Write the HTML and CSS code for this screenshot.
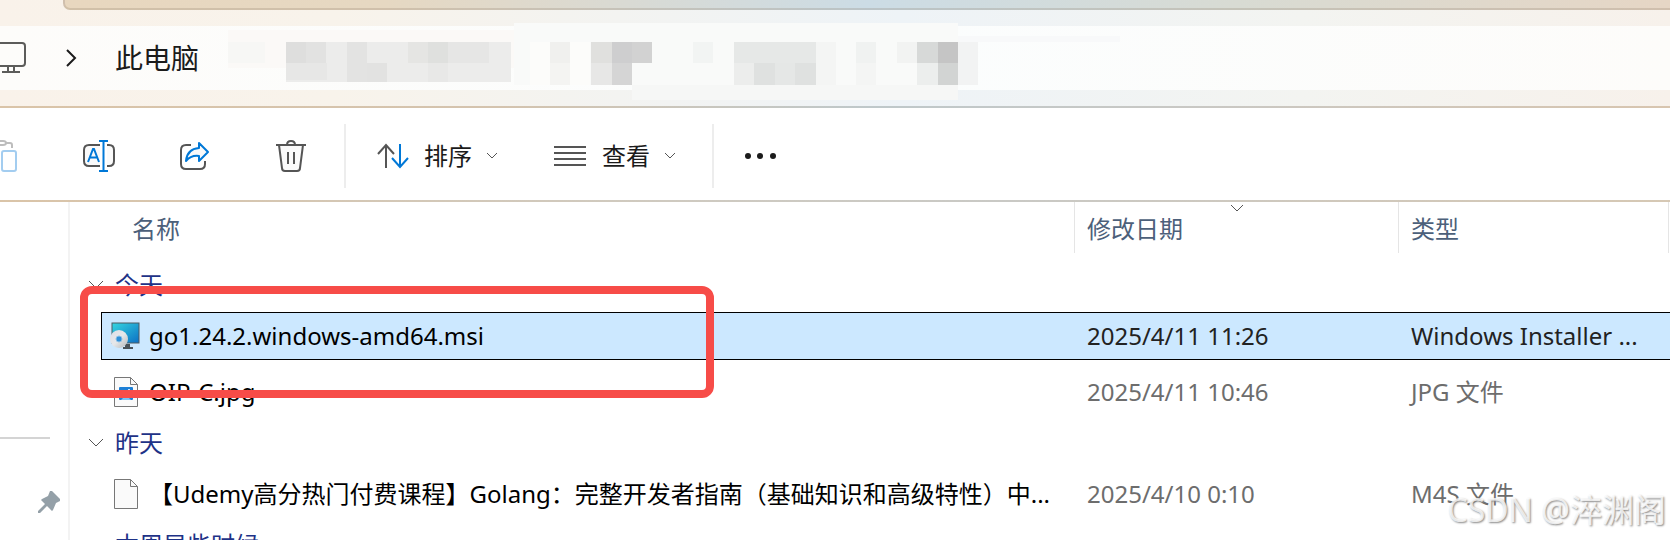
FILE: index.html
```html
<!DOCTYPE html>
<html lang="zh-CN">
<head>
  <meta charset="UTF-8">
  <title>此电脑</title>
  <link rel="stylesheet" href="styles.css">
</head>
<body>

  <header class="titlebar">
    <div class="tab"></div>
    <div class="address">
      <svg class="pc-icon" width="28" height="32" viewBox="0 0 28 32" fill="none" stroke="#5c5c5a" stroke-width="2">
        <rect x="-5" y="1" width="30" height="23" rx="3"/>
        <path d="M8 24v5M14 24v5M2 30h18"/>
      </svg>
      <svg class="crumb-arrow" width="12" height="20" viewBox="0 0 12 20" fill="none" stroke="#1b1b1b" stroke-width="2">
        <path d="M1 2l8 8-8 8"/>
      </svg>
      <a class="crumb" href="#">此电脑</a>
      <!-- pixelated part of the path -->
      <svg class="mosaic" width="892" height="84" viewBox="0 0 892 84" shape-rendering="crispEdges">
        <rect x="0" y="14" width="286" height="38" fill="#fbf9f7"/>
        <rect x="0" y="26" width="37" height="21" fill="#f7f7f5"/>
        <rect x="58" y="26" width="225" height="40" fill="#ececeb"/>
        <rect x="58" y="26" width="20" height="21" fill="#dededd"/>
        <rect x="78" y="26" width="20" height="21" fill="#e2e2e1"/>
        <rect x="58" y="47" width="41" height="17" fill="#e7e7e6"/>
        <rect x="119" y="26" width="20" height="40" fill="#e3e3e2"/>
        <rect x="139" y="47" width="20" height="19" fill="#e2e2e1"/>
        <rect x="180" y="26" width="20" height="21" fill="#e5e5e3"/>
        <rect x="200" y="26" width="20" height="21" fill="#dfe0de"/>
        <rect x="200" y="47" width="20" height="19" fill="#e8e8e7"/>
        <rect x="220" y="26" width="41" height="21" fill="#e6e6e5"/>
        <rect x="286" y="7" width="444" height="62" fill="#f9faf9"/>
        <rect x="404" y="69" width="326" height="15" fill="#f6f7f6"/>
        <rect x="730" y="20" width="162" height="6" fill="#f8f9fa"/>
        <rect x="302" y="26" width="20" height="43" fill="#fcfcfa"/>
        <rect x="322" y="26" width="20" height="43" fill="#f4f4f2"/>
        <rect x="322" y="26" width="20" height="21" fill="#f0f0ee"/>
        <rect x="342" y="26" width="20" height="43" fill="#fcfcfa"/>
        <rect x="363" y="26" width="21" height="21" fill="#e0e0de"/>
        <rect x="363" y="47" width="21" height="22" fill="#e7e7e6"/>
        <rect x="384" y="26" width="20" height="21" fill="#cececf"/>
        <rect x="384" y="47" width="20" height="22" fill="#d5d5d5"/>
        <rect x="404" y="26" width="20" height="21" fill="#d2d2d2"/>
        <rect x="465" y="26" width="20" height="21" fill="#f2f4f3"/>
        <rect x="506" y="26" width="82" height="21" fill="#e6e8e7"/>
        <rect x="506" y="47" width="20" height="22" fill="#ecedec"/>
        <rect x="526" y="47" width="21" height="22" fill="#dfe1e0"/>
        <rect x="547" y="47" width="20" height="22" fill="#e5e7e6"/>
        <rect x="567" y="47" width="21" height="22" fill="#dfe1e0"/>
        <rect x="588" y="26" width="20" height="43" fill="#f4f5f4"/>
        <rect x="628" y="26" width="20" height="21" fill="#f0f2f1"/>
        <rect x="628" y="47" width="20" height="22" fill="#f4f5f4"/>
        <rect x="669" y="26" width="20" height="21" fill="#f2f3f2"/>
        <rect x="689" y="26" width="21" height="21" fill="#d7d9d8"/>
        <rect x="689" y="47" width="21" height="22" fill="#eceeed"/>
        <rect x="710" y="26" width="20" height="21" fill="#c5c5c5"/>
        <rect x="710" y="47" width="20" height="22" fill="#d2d4d3"/>
        <rect x="730" y="26" width="20" height="43" fill="#f2f3f3"/>
      </svg>
    </div>
  </header>

  <div class="toolbar">
    <button class="tool paste" aria-label="粘贴">
      <svg width="20" height="34" viewBox="0 0 20 34" fill="none" stroke-width="2">
        <path d="M-2 2h5q3 0 3 2t-3 2h-5M6 4h4q2 0 2 2v3" stroke="#bdbdbd"/>
        <rect x="2" y="12" width="14" height="20" rx="2" stroke="#a3cdf0"/>
      </svg>
    </button>
    <button class="tool rename" aria-label="重命名">
      <svg width="34" height="34" viewBox="0 0 34 34" fill="none" stroke-width="2">
        <path d="M18 6H7q-5 0-5 5v11q0 5 5 5h11M25 6h2q5 0 5 5v11q0 5-5 5h-2" fill="#fafafa" stroke="#555"/>
        <path d="M6 23l5-13h1l5 13M8 18.500h7M17 2h9M17 32h9M21.500 2v30" stroke="#0078d7"/>
      </svg>
    </button>
    <button class="tool share" aria-label="共享">
      <svg width="34" height="34" viewBox="0 0 34 34" fill="none" stroke-width="2" stroke-linejoin="round">
        <path d="M13 6H8Q3 6 3 11v14q0 5 5 5h14q5 0 5-5v-3" stroke="#555"/>
        <path d="M21 4l9 9-9 9v-5q-8-1-13 5 1-12 13-13z" fill="#fafafa" stroke="#0078d7"/>
      </svg>
    </button>
    <button class="tool delete" aria-label="删除">
      <svg width="34" height="34" viewBox="0 0 34 34" fill="none" stroke="#555" stroke-width="2">
        <path d="M5 6l3 23q0 3 3 3h12q3 0 3-3l3-23z" fill="#fafafa"/>
        <path d="M2 6h30M13 6q0-4 4-4t4 4M14 13v12M20 13v12"/>
      </svg>
    </button>
    <span class="separator"></span>
    <button class="tool sort">
      <svg width="34" height="28" viewBox="0 0 34 28" fill="none" stroke-width="2">
        <path d="M10 26V3M2 12l8-9 8 9" stroke="#555"/>
        <path d="M24 2v23M16 16l8 9 8-9" stroke="#0078d7"/>
      </svg>
      排序
      <svg class="caret" width="12" height="8" viewBox="0 0 12 8"><path d="M1 1l5 5 5-5"/></svg>
    </button>
    <button class="tool view">
      <svg width="34" height="22" viewBox="0 0 34 22" stroke="#555" stroke-width="2">
        <path d="M0 2h32M0 8h32M0 14h32M0 20h32"/>
      </svg>
      查看
      <svg class="caret" width="12" height="8" viewBox="0 0 12 8"><path d="M1 1l5 5 5-5"/></svg>
    </button>
    <span class="separator"></span>
    <button class="tool more" aria-label="更多">
      <svg width="34" height="8" viewBox="0 0 34 8" fill="#1b1b1b">
        <circle cx="4" cy="4" r="3"/><circle cx="16" cy="4" r="3"/><circle cx="29" cy="4" r="3"/>
      </svg>
    </button>
  </div>

  <div class="main">
    <nav class="sidebar">
      <hr>
      <svg class="pin" width="22" height="22" viewBox="0 0 22 22" fill="#94a0a8">
        <path d="M12 0h2l8 8v2l-4 2-3 7-1 1-5-5-7 7H0v-2l7-7-4-4 1-1 6-3z"/>
      </svg>
    </nav>

    <div class="files">
      <table>
        <colgroup>
          <col class="col-name"><col class="col-date"><col class="col-type"><col>
        </colgroup>
        <thead>
          <tr>
            <th class="name">名称</th>
            <th>修改日期
              <svg class="sort-mark" width="14" height="8" viewBox="0 0 14 8"><path d="M1 1l6 6 6-6"/></svg>
            </th>
            <th>类型</th>
            <th></th>
          </tr>
        </thead>
        <tbody>
          <tr class="group first">
            <td colspan="4"><div><svg class="fold" width="16" height="10" viewBox="0 0 16 10"><path d="M1 1l7 7 7-7"/></svg>今天</div></td>
          </tr>
          <tr class="file selected">
            <td class="name"><div>
              <svg class="file-icon" width="32" height="28" viewBox="0 0 32 28">
                <defs>
                  <linearGradient id="screen" x1="0" y1="0" x2="1" y2="1">
                    <stop offset="0" stop-color="#35d6e0"/><stop offset="1" stop-color="#0c6fc4"/>
                  </linearGradient>
                  <linearGradient id="disc" x1="0" y1="0" x2="1" y2="1">
                    <stop offset="0" stop-color="#dcdce6"/><stop offset=".5" stop-color="#e6e8ea"/><stop offset="1" stop-color="#b4b7b9"/>
                  </linearGradient>
                </defs>
                <path d="M16 22h5v3h-5zM14 25h10v2H14z" fill="#4a5258"/>
                <rect x="3" y="1" width="27" height="20" fill="url(#screen)" stroke="#4d5b63"/>
                <circle cx="10" cy="17" r="9" fill="url(#disc)"/>
                <circle cx="10" cy="17" r="3" fill="#2f8fd8" stroke="#8cc0e6"/>
              </svg>
              <span>go1.24.2.windows-amd64.msi</span>
            </div></td>
            <td>2025/4/11 11:26</td>
            <td>Windows Installer ...</td>
            <td></td>
          </tr>
          <tr class="gap"><td colspan="4"></td></tr>
          <tr class="file">
            <td class="name"><div>
              <svg class="file-icon" width="32" height="32" viewBox="0 0 32 32">
                <path d="M5.500 1.500h16l7 7v22h-23z" fill="#fafafa" stroke="#777"/>
                <path d="M21.500 1.500v7h7" fill="none" stroke="#777"/>
                <rect x="10" y="11" width="14" height="13" rx="1" fill="#1c7fd6"/>
                <path d="M12 24l5-5 5 5z" fill="#7cc4f4"/>
                <circle cx="20" cy="14" r="1" fill="#fff"/>
              </svg>
              <span>OIP-C.jpg</span>
            </div></td>
            <td>2025/4/11 10:46</td>
            <td>JPG 文件</td>
            <td></td>
          </tr>
          <tr class="group">
            <td colspan="4"><div><svg class="fold" width="16" height="10" viewBox="0 0 16 10"><path d="M1 1l7 7 7-7"/></svg>昨天</div></td>
          </tr>
          <tr class="file">
            <td class="name"><div>
              <svg class="file-icon" width="32" height="32" viewBox="0 0 32 32">
                <path d="M5.500 1.500h16l7 7v22h-23z" fill="#fafafa" stroke="#777"/>
                <path d="M21.500 1.500v7h7" fill="none" stroke="#777"/>
              </svg>
              <span>【Udemy高分热门付费课程】Golang：完整开发者指南（基础知识和高级特性）中...</span>
            </div></td>
            <td>2025/4/10 0:10</td>
            <td>M4S 文件</td>
            <td></td>
          </tr>
          <tr class="group">
            <td colspan="4"><div><svg class="fold" width="16" height="10" viewBox="0 0 16 10"><path d="M1 1l7 7 7-7"/></svg>本周早些时候</div></td>
          </tr>
        </tbody>
      </table>
      <div class="highlight"></div>
    </div>
  </div>

  <div class="watermark">CSDN @淬渊阁</div>

</body>
</html>
```
FILE: styles.css
```css
* {
  box-sizing: border-box;
}

body {
  margin: 0;
  height: 100vh;
  overflow: hidden;
  position: relative;
  display: flex;
  flex-direction: column;
  background: #fff;
  color: #000;
  font-family: "Noto Sans", "Noto Sans CJK SC", sans-serif;
  font-size: 24px;
  line-height: 32px;
}

svg {
  flex: none;
  display: block;
}

/* title bar */
.titlebar {
  flex: none;
  height: 108px;
  border-bottom: 2px solid;
  border-image: linear-gradient(to right, #dac4a8, #d4c3ae 30%, #bfc8ca 52%, #c9c8c4 72%, #d8c5af) 1;
  background: linear-gradient(to right, #f9f2ea, #f8f3eb 20%, #eef3f7 54%, #f3f4f1 78%, #f7f1eb);
}

.tab {
  height: 10px;
  margin-left: 63px;
  border-bottom: 2px solid rgba(120, 100, 80, 0.2);
  border-left: 2px solid rgba(120, 100, 80, 0.2);
  border-bottom-left-radius: 7px;
  background: linear-gradient(to right, #e8d7bf, #e6d8c2 20%, #ccdce5 50%, #d8dbd3 73%, #e6d6c5);
}

.address {
  display: flex;
  align-items: center;
  height: 64px;
  margin-top: 16px;
  background: linear-gradient(to right, #fdfcfa, #fbfdfd 55%, #fdfcfa);
}

.crumb-arrow {
  margin-left: 38px;
}

.crumb {
  margin: 0 29px 0 37px;
  font-size: 28px;
  color: #1b1b1b;
  text-decoration: none;
}

/* toolbar */
.toolbar {
  flex: none;
  display: flex;
  align-items: center;
  height: 94px;
  padding-top: 4px;
  border-bottom: 2px solid;
  border-image: linear-gradient(to right, #dac4a8, #cfcac0 40%, #c9c9c5 60%, #d6c8b4) 1;
}

.tool {
  display: flex;
  align-items: center;
  padding: 0;
  border: 0;
  background: none;
  color: #1b1b1b;
  font: inherit;
}

.rename {
  margin-left: 62px;
}

.share,
.delete {
  margin-left: 62px;
}

.separator {
  width: 2px;
  height: 64px;
  margin: 0 30px 0 36px;
  background: #ededed;
}

.sort,
.view {
  gap: 14px;
}

.view {
  margin-left: 56px;
}

.caret,
.fold,
.sort-mark {
  fill: none;
  stroke: #555;
}

/* content */
.main {
  flex: 1;
  min-height: 0;
  display: flex;
  overflow: hidden;
}

.sidebar {
  flex: none;
  width: 70px;
  border-right: 2px solid #f3f3f3;
}

.sidebar hr {
  width: 50px;
  height: 2px;
  margin: 235px 0 52px;
  border: 0;
  background: #d4d4d4;
}

.pin {
  margin-left: 38px;
}

.files {
  flex: 1;
  min-width: 0;
  position: relative;
}

table {
  width: 100%;
  table-layout: fixed;
  border-collapse: separate;
  border-spacing: 0;
}

.col-name {
  width: 1005px;
}

.col-date {
  width: 324px;
}

.col-type {
  width: 270px;
}

th {
  position: relative;
  height: 51px;
  padding: 2px 0 0 12px;
  border-right: 1px solid #e5e5e5;
  color: #4c607a;
  font-weight: 400;
  text-align: left;
  white-space: nowrap;
}

th.name {
  padding-left: 62px;
}

th:last-child {
  border-right: 0;
}

.sort-mark {
  position: absolute;
  top: 2px;
  left: calc(50% - 7px);
}

td {
  padding: 0 0 0 12px;
  color: #6d6d6d;
  white-space: nowrap;
}

td.name {
  padding-left: 31px;
  color: #000;
}

.file td {
  height: 48px;
}

.file td > div,
.group td > div {
  display: flex;
  align-items: center;
}

.file td > div {
  height: 46px;
  gap: 8px;
  padding-left: 8px;
}

.gap td {
  height: 8px;
}

.group td {
  height: 54px;
  padding-left: 18px;
  color: #1e3287;
}

.group.first td {
  height: 59px;
  padding-top: 5px;
}

.group td > div {
  gap: 11px;
}

.selected td {
  border-top: 1px solid #000;
  border-bottom: 1px solid #000;
  background: #cce8ff;
  color: #222;
}

.selected td.name {
  border-top: 0;
  border-bottom: 0;
  background: none;
  color: #000;
}

.selected td.name > div {
  height: 48px;
  padding-left: 7px;
  border: 1px solid #000;
  border-right: 0;
  background: #cce8ff;
}

/* red frame drawn over the installer row */
.highlight {
  position: absolute;
  top: 84px;
  left: 10px;
  width: 634px;
  height: 112px;
  border: 8px solid #f74c48;
  border-radius: 12px;
}

.watermark {
  position: absolute;
  right: 4px;
  bottom: 8px;
  color: rgba(255, 255, 255, 0.8);
  font-size: 32px;
  line-height: 44px;
  text-shadow: 1px 1px 2px #888;
}
```
